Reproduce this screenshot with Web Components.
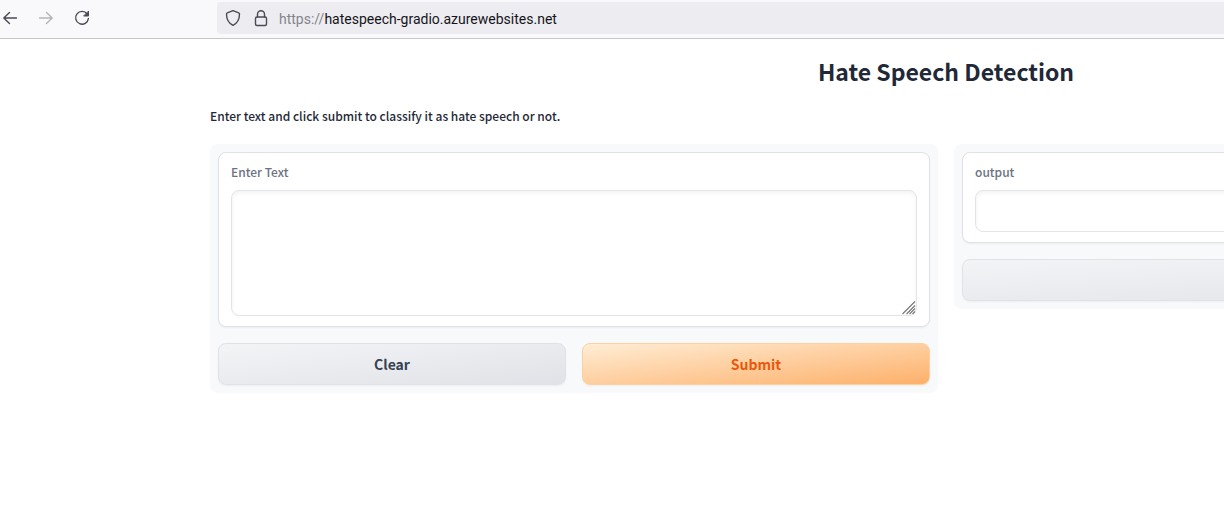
<!DOCTYPE html>
<html lang="en">
<head>
<meta charset="utf-8">
<meta name="viewport" content="width=device-width, initial-scale=1">
<title>Hate Speech Detection</title>
<style>
  body { margin: 0; background: #fff; font-family: "Noto Sans CJK SC", "Open Sans", sans-serif; color: #1f2937; }
</style>
</head>
<body>
<browser-bar>
  <span slot="scheme">https://</span><span slot="host">hatespeech-gradio.azurewebsites.net</span>
</browser-bar>
<demo-page>
  <span slot="title">Hate Speech Detection</span>
  <span slot="description">Enter text and click submit to classify it as hate speech or not.</span>
  <demo-panel>
    <text-field label="Enter Text" rows="5" resizable></text-field>
    <button-row>
      <demo-button>Clear</demo-button>
      <demo-button variant="primary">Submit</demo-button>
    </button-row>
  </demo-panel>
  <demo-panel>
    <text-field label="output" rows="1" readonly></text-field>
    <button-row><demo-button></demo-button></button-row>
  </demo-panel>
</demo-page>
<script>
class BaseElement extends HTMLElement {
  constructor() {
    super();
    this.attachShadow({ mode: "open" }).innerHTML = this.constructor.markup;
  }
}

customElements.define("browser-bar", class extends BaseElement {
  static markup = `
    <style>
      :host { display: flex; align-items: flex-start; box-sizing: border-box; height: 39px; padding-top: 2px; background: #f9f9fb; border-bottom: 1px solid #c6c6c8; overflow: hidden; }
      nav { display: flex; align-items: center; gap: 16px; height: 32px; width: 217px; flex: none; }
      button { display: block; padding: 0; border: 0; background: none; width: 20px; height: 20px; color: #4b4a55; }
      button:disabled { color: #b4b4ba; }
      svg { display: block; fill: none; stroke: currentColor; stroke-width: 1.4; stroke-linecap: round; stroke-linejoin: round; }
      .address { display: flex; align-items: center; gap: 8px; flex: 1; height: 32px; padding-left: 6px; border-radius: 4px 0 0 4px; background: #ededf1; color: #4b4a55; }
      .url { font: 14px/20px Roboto, sans-serif; color: #15141a; white-space: nowrap; padding-top: 2px; }
      ::slotted([slot="scheme"]) { color: #85848c; }
    </style>
    <nav aria-label="Browser navigation">
      <button aria-label="Back"><svg width="20" height="20" viewBox="0 0 20 20"><path d="M4 10H16.500M9.500 4.500L3.800 10L9.500 15.500"/></svg></button>
      <button aria-label="Forward" disabled><svg width="20" height="20" viewBox="0 0 20 20"><path d="M3.500 10H16M10.500 4.500L16.200 10L10.500 15.500"/></svg></button>
      <button aria-label="Reload"><svg width="20" height="20" viewBox="0 0 20 20"><path d="M15.200 6A6.400 6.400 0 1 0 16.400 10.500"/><path d="M16.500 3.500V8H12Z" fill="currentColor" stroke-width="1"/></svg></button>
    </nav>
    <div class="address">
      <svg width="20" height="20" viewBox="0 0 20 20" aria-hidden="true"><path d="M10 2.600L15.700 4.900Q16.500 5.200 16.500 6.100C16.500 11 14.300 15.300 10 17.400C5.700 15.300 3.500 11 3.500 6.100Q3.500 5.200 4.300 4.900Z"/></svg>
      <svg width="20" height="20" viewBox="0 0 20 20" aria-hidden="true"><rect x="4.500" y="9" width="11" height="8.500" rx="1.500"/><path d="M6.500 9V6.200A3.500 3.500 0 0 1 13.500 6.200V9"/></svg>
      <div class="url"><slot name="scheme"></slot><slot name="host"></slot></div>
    </div>`;
});

customElements.define("demo-page", class extends BaseElement {
  static markup = `
    <style>
      :host { display: block; overflow: clip; }
      main { box-sizing: border-box; width: calc(100vw + 668px); padding: 16px 210px; }
      h1 { margin: 0; font-size: 23px; line-height: 32px; font-weight: 700; text-align: center; }
      p { margin: 18px 0; font-size: 12px; line-height: 21px; font-weight: 500; }
      .columns { display: grid; grid-template-columns: 1fr 1fr; align-items: start; gap: 16px; }
    </style>
    <main>
      <h1><slot name="title"></slot></h1>
      <p><slot name="description"></slot></p>
      <div class="columns"><slot></slot></div>
    </main>`;
});

customElements.define("demo-panel", class extends BaseElement {
  static markup = `
    <style>
      :host { display: flex; flex-direction: column; gap: 16px; padding: 8px; border-radius: 8px; background: #f8f9fb; }
    </style>
    <slot></slot>`;
});

customElements.define("button-row", class extends BaseElement {
  static markup = `
    <style>:host { display: flex; gap: 16px; }</style>
    <slot></slot>`;
});

customElements.define("text-field", class extends BaseElement {
  static markup = `
    <style>
      :host { display: block; padding: 9px 12px 10px; border: 1px solid #e0e2e8; border-radius: 8px; background: #fff; box-shadow: 0 1px 2px rgba(0,0,0,.05); }
      label { display: block; margin-bottom: 8px; font-size: 12px; line-height: 20px; font-weight: 500; color: #6b7280; }
      .box { position: relative; }
      textarea { display: block; box-sizing: border-box; width: 100%; padding: 10px 10px 9px; border: 1px solid #e2e4e8; border-radius: 8px; outline: none; resize: none; overflow: hidden; background: #fff; box-shadow: inset 0 2px 4px rgba(0,0,0,.05); font: 12px/21px "Noto Sans CJK SC", sans-serif; color: #1f2937; }
      svg { position: absolute; right: 1px; bottom: 1px; pointer-events: none; stroke: #777; stroke-width: 1.1; }
      :host(:not([resizable])) svg { display: none; }
    </style>
    <label for="input"></label>
    <div class="box">
      <textarea id="input"></textarea>
      <svg width="14" height="14" viewBox="0 0 14 14" aria-hidden="true"><path d="M.5 13L13 .5M4.500 13L13 4.500M7.500 13L13 7.500M10.500 13L13 10.500"/></svg>
    </div>`;
  connectedCallback() {
    this.shadowRoot.querySelector("label").textContent = this.getAttribute("label");
    const area = this.shadowRoot.querySelector("textarea");
    area.rows = Number(this.getAttribute("rows"));
    area.readOnly = this.hasAttribute("readonly");
  }
});

customElements.define("demo-button", class extends BaseElement {
  static markup = `
    <style>
      :host { display: block; flex: 1; }
      button { display: block; box-sizing: border-box; width: 100%; height: 42px; padding: 0 16px; border: 1px solid #dfe2e6; border-radius: 8px; background: linear-gradient(to bottom right, #f3f4f6, #e0e2e7); box-shadow: 0 1px 2px rgba(0,0,0,.05); font: 700 14px/24px "Noto Sans CJK SC", sans-serif; color: #374151; }
      :host([variant="primary"]) button { border-color: #fed0a0; background: linear-gradient(to bottom right, #ffedd5, #fdb06a); color: #ea580c; }
    </style>
    <button type="button"><slot></slot></button>`;
});
</script>
</body>
</html>
